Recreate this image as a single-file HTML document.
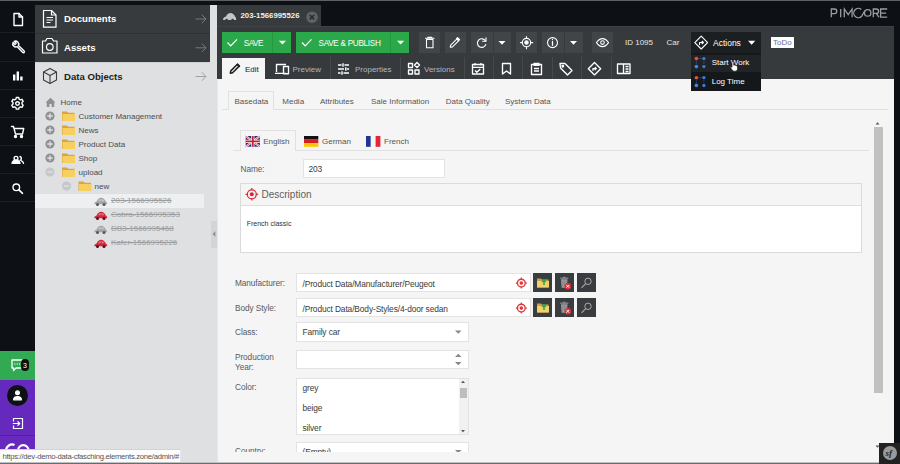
<!DOCTYPE html>
<html><head><meta charset="utf-8">
<style>
*{box-sizing:border-box;margin:0;padding:0}
html,body{width:900px;height:464px;overflow:hidden;background:#f5f5f5;font-family:"Liberation Sans",sans-serif;position:relative}
.a{position:absolute}
.t{position:absolute;white-space:nowrap;line-height:1}
svg{position:absolute;overflow:visible}
.sep{position:absolute;left:0;width:35px;height:1px;background:#1c1f23}
.tr{position:absolute;white-space:nowrap;line-height:1;font-size:8px;color:#4a4d50}
.st{text-decoration:line-through;color:#9b9d9f}
.tb{position:absolute;top:32px;height:21px;background:#424548}
.ts{position:absolute;top:57px;width:1px;height:22px;background:#46494c}
.lbl{position:absolute;white-space:nowrap;line-height:1;font-size:8.3px;letter-spacing:-0.1px;color:#5a5a5a}
.inp{position:absolute;background:#fff;border:1px solid #e3e3e3}
.ib{position:absolute;width:19px;height:19px;background:#3a3d40}
</style></head><body>
<!-- top strip -->
<div class="a" style="left:0;top:0;width:900px;height:1px;background:#5e6064"></div>
<!-- left sidebar -->
<div class="a" style="left:0;top:1px;width:35px;height:463px;background:#0d1014"></div>
<div class="sep" style="top:32px"></div>
<div class="sep" style="top:61px"></div>
<div class="sep" style="top:89px"></div>
<div class="sep" style="top:117px"></div>
<div class="sep" style="top:145px"></div>
<div class="sep" style="top:173px"></div>
<div class="sep" style="top:201px"></div>
<!-- sidebar icons -->
<svg style="left:0;top:0" width="35" height="210" viewBox="0 0 35 210" fill="none" stroke="#fff" stroke-width="1.4" stroke-linejoin="round" stroke-linecap="round">
  <!-- doc -->
  <path d="M14 13.5h5l3.5 3.5v8.5h-8.5z"/><path d="M19 13.5v3.5h3.5" />
  <!-- wrench -->
  <path d="M13 42.5a3.2 3.2 0 0 0 4.2 4.2l5.6 5.8a1 1 0 0 0 1.4-1.4l-5.8-5.6a3.2 3.2 0 0 0-4.2-4.2l2 2-1.2 1.2z"/>
  <!-- chart -->
  <path d="M14.2 74.5v6M17.8 71.5v9M21.4 76.5v4" stroke-width="2.4" stroke-linecap="butt"/>
  <!-- gear -->
  <circle cx="17.5" cy="103.5" r="1.8"/>
  <path d="M16.3 97.5h2.4l.4 1.6 1.3.7 1.6-.5 1.2 2-1.2 1.2v1.6l1.2 1.1-1.2 2.1-1.6-.5-1.3.7-.4 1.6h-2.4l-.4-1.6-1.3-.7-1.6.5-1.2-2.1 1.2-1.1v-1.6l-1.2-1.2 1.2-2 1.6.5 1.3-.7z"/>
  <!-- cart -->
  <path d="M11.5 126.5h2l2 7.5h7l1.2-5.5h-9.2"/><circle cx="15.5" cy="136.5" r="1" fill="#fff"/><circle cx="21.5" cy="136.5" r="1" fill="#fff"/>
  <!-- users -->
  <circle cx="16" cy="158.3" r="1.9"/><path d="M12 163.3c.5-2.2 2-3 4-3s3.5.8 4 3z" fill="#fff"/>
  <path d="M20 156.5a2 2 0 0 1 0 3.8M21.5 160.8c1 .5 1.8 1.3 2 2.5" />
  <!-- search -->
  <circle cx="16.3" cy="187.3" r="3.3"/><path d="M18.7 189.7l3.8 3.6" stroke-width="1.6"/>
</svg>
<!-- bottom sidebar -->
<div class="a" style="left:0;top:351px;width:35px;height:29px;background:#32a953"></div>
<div class="a" style="left:0;top:380px;width:35px;height:84px;background:#6629bd"></div>
<div class="a" style="left:0;top:435px;width:35px;height:1px;background:#5220a0"></div>
<svg style="left:0;top:350px" width="35" height="114" viewBox="0 0 35 114" fill="none" stroke="#fff" stroke-width="1.3" stroke-linejoin="round">
  <path d="M12 10h10v8h-6l-2.5 2.5v-2.5h-1.5z"/>
  <path d="M14.5 14h.8M16.8 14h.8M19 14h.8"/>
</svg>
<div class="a" style="left:21px;top:359px;width:8px;height:12px;border-radius:4px;background:#0d1014"></div>
<div class="t" style="left:23px;top:361.5px;font-size:7px;color:#fff">3</div>
<div class="a" style="left:7px;top:385px;width:21px;height:21px;border-radius:50%;background:#0d1014"></div>
<svg style="left:0;top:380px" width="35" height="84" viewBox="0 0 35 84" fill="none" stroke="#fff" stroke-width="1.2" stroke-linejoin="round">
  <circle cx="17.5" cy="12.8" r="1.9" fill="#fff"/><path d="M13.6 19.8c0-2.2 1.6-3.2 3.9-3.2s3.9 1 3.9 3.2z" fill="#fff"/>
  <path d="M13.5 41.5v-3h9v10h-9v-3M12.8 43.5h6.8M17.5 41.3l2.2 2.2-2.2 2.2"/>
  <path d="M14.5 65a6 6 0 1 0 0 11" stroke-width="2.2"/><circle cx="23.3" cy="70.5" r="5.3" stroke-width="2.2"/>
</svg>

<!-- tree panel -->
<div class="a" style="left:35px;top:1px;width:182px;height:4px;background:#0d1014"></div>
<div class="a" style="left:35px;top:5px;width:182px;height:457px;background:#dfe0e2"></div>
<div class="a" style="left:35px;top:5px;width:175px;height:28px;background:#383b3e"></div>
<div class="a" style="left:35px;top:33px;width:175px;height:1px;background:#2f3235"></div>
<div class="a" style="left:35px;top:34px;width:175px;height:28px;background:#383b3e"></div>
<div class="a" style="left:35px;top:62px;width:175px;height:1px;background:#d0d1d3"></div>
<svg style="left:35px;top:0" width="175" height="90" viewBox="0 0 175 90" fill="none" stroke-linejoin="round">
  <g stroke="#fff" stroke-width="1.2">
    <path d="M8.5 10.5h8l4.5 4.5v12.2h-12.5z"/><path d="M16.5 10.5v4.5h4.5"/>
    <path d="M11.5 17.5h6.5M11.5 20h6.5M11.5 22.5h4" stroke-width="1.1"/>
    <path d="M7.5 41h3l1.5-2.5h5l1.5 2.5h3.5v12h-14.5z"/><circle cx="14.8" cy="47" r="3.3"/>
    <path d="M171 19h-10.5M166.8 14.8l4.2 4.2-4.2 4.2" stroke="#77797c" stroke-width="1"/>
    <path d="M171 47.8h-10.5M166.8 43.6l4.2 4.2-4.2 4.2" stroke="#77797c" stroke-width="1"/>
  </g>
  <g stroke="#3a3c3f" stroke-width="1.1">
    <path d="M15 68.5l6.5 3.5v8l-6.5 3.5-6.5-3.5v-8z"/><path d="M8.5 72l6.5 3.5 6.5-3.5M15 75.5v8"/>
  </g>
  <path d="M171 76.5h-10.5M166.8 72.3l4.2 4.2-4.2 4.2" stroke="#a0a2a4" stroke-width="1"/>
</svg>
<div class="t" style="left:64px;top:13.8px;font-size:9.6px;font-weight:bold;color:#fff">Documents</div>
<div class="t" style="left:64px;top:43.3px;font-size:9.6px;font-weight:bold;color:#fff">Assets</div>
<div class="t" style="left:64px;top:72px;font-size:9.6px;font-weight:bold;color:#1b1d20">Data Objects</div>

<!-- tree -->
<div class="a" style="left:35px;top:193.5px;width:169px;height:14.5px;background:#eeeff0"></div>
<svg style="left:35px;top:90px" width="175" height="165" viewBox="0 0 175 165">
  <!-- home -->
  <path d="M10.5 12.5l5-4.8 5 4.8h-1.3v4.5h-2.6v-3h-2.2v3h-2.6v-4.5z" fill="#8e9093"/>
  <!-- plus circles -->
  <g fill="#8e9093">
    <circle cx="15" cy="26" r="4.6"/><circle cx="15" cy="40" r="4.6"/><circle cx="15" cy="54" r="4.6"/><circle cx="15" cy="68" r="4.6"/>
  </g>
  <g stroke="#dfe0e2" stroke-width="1.3">
    <path d="M12.3 26h5.4M15 23.3v5.4M12.3 40h5.4M15 37.3v5.4M12.3 54h5.4M15 51.3v5.4M12.3 68h5.4M15 65.3v5.4"/>
  </g>
  <g fill="#c6c7c9"><circle cx="15" cy="82" r="4.6"/><circle cx="31.5" cy="96" r="4.6"/></g>
  <g stroke="#dfe0e2" stroke-width="1.3"><path d="M12.3 82h5.4M28.8 96h5.4"/></g>
  <!-- folders -->
  <g>
    <path d="M27 21.5h5l1 1.2h6.5v8.3h-12.5z" fill="#d9a441"/><path d="M27.5 24h12.5v7h-12.5z" fill="#f7cf5e"/>
    <path d="M27 35.5h5l1 1.2h6.5v8.3h-12.5z" fill="#d9a441"/><path d="M27.5 38h12.5v7h-12.5z" fill="#f7cf5e"/>
    <path d="M27 49.5h5l1 1.2h6.5v8.3h-12.5z" fill="#d9a441"/><path d="M27.5 52h12.5v7h-12.5z" fill="#f7cf5e"/>
    <path d="M27 63.5h5l1 1.2h6.5v8.3h-12.5z" fill="#d9a441"/><path d="M27.5 66h12.5v7h-12.5z" fill="#f7cf5e"/>
    <path d="M27 77.5h5l1 1.2h6.5v8.3h-12.5z" fill="#d9a441"/><path d="M27.5 80h12.5v7h-12.5z" fill="#f7cf5e"/>
    <path d="M43.5 91.5h5l1 1.2h6.5v8.3h-12.5z" fill="#d9a441"/><path d="M44 94h12.5v7h-12.5z" fill="#f7cf5e"/>
  </g>
  <!-- cars -->
  <g transform="translate(59,107.5)">
    <path d="M0.3 6.8C0.3 5.2 1 4.4 2.6 4C3.6 1.4 5.2 0.2 7 0.2C9.2 0.2 10.8 1.6 11.8 4C12.7 4.4 13.2 5.3 13.2 6.8Z" fill="#a3a6a9"/>
    <path d="M4.2 3.8C4.8 2.2 5.8 1.4 6.6 1.4V3.8ZM7.6 1.4C8.6 1.4 9.6 2.2 10.2 3.8H7.6Z" fill="#e8e8e8" opacity=".55"/>
    <circle cx="3.5" cy="7" r="1.5" fill="#55585b"/><circle cx="10" cy="7" r="1.5" fill="#55585b"/>
  </g>
  <g transform="translate(59,121.5)">
    <path d="M0.3 6.8C0.3 5.2 1 4.4 2.6 4C3.6 1.4 5.2 0.2 7 0.2C9.2 0.2 10.8 1.6 11.8 4C12.7 4.4 13.2 5.3 13.2 6.8Z" fill="#d3263a"/>
    <path d="M4.2 3.8C4.8 2.2 5.8 1.4 6.6 1.4V3.8ZM7.6 1.4C8.6 1.4 9.6 2.2 10.2 3.8H7.6Z" fill="#f4c0c0" opacity=".55"/>
    <circle cx="3.5" cy="7" r="1.5" fill="#5a1018"/><circle cx="10" cy="7" r="1.5" fill="#5a1018"/>
  </g>
  <g transform="translate(59,135.5)">
    <path d="M0.3 6.8C0.3 5.2 1 4.4 2.6 4C3.6 1.4 5.2 0.2 7 0.2C9.2 0.2 10.8 1.6 11.8 4C12.7 4.4 13.2 5.3 13.2 6.8Z" fill="#a3a6a9"/>
    <path d="M4.2 3.8C4.8 2.2 5.8 1.4 6.6 1.4V3.8ZM7.6 1.4C8.6 1.4 9.6 2.2 10.2 3.8H7.6Z" fill="#e8e8e8" opacity=".55"/>
    <circle cx="3.5" cy="7" r="1.5" fill="#55585b"/><circle cx="10" cy="7" r="1.5" fill="#55585b"/>
  </g>
  <g transform="translate(59,149.5)">
    <path d="M0.3 6.8C0.3 5.2 1 4.4 2.6 4C3.6 1.4 5.2 0.2 7 0.2C9.2 0.2 10.8 1.6 11.8 4C12.7 4.4 13.2 5.3 13.2 6.8Z" fill="#d3263a"/>
    <path d="M4.2 3.8C4.8 2.2 5.8 1.4 6.6 1.4V3.8ZM7.6 1.4C8.6 1.4 9.6 2.2 10.2 3.8H7.6Z" fill="#f4c0c0" opacity=".55"/>
    <circle cx="3.5" cy="7" r="1.5" fill="#5a1018"/><circle cx="10" cy="7" r="1.5" fill="#5a1018"/>
  </g>
  </svg>
<div class="tr" style="left:60.5px;top:98.7px">Home</div>
<div class="tr" style="left:78.5px;top:112.7px">Customer Management</div>
<div class="tr" style="left:78.5px;top:126.7px">News</div>
<div class="tr" style="left:78.5px;top:140.7px">Product Data</div>
<div class="tr" style="left:78.5px;top:154.7px">Shop</div>
<div class="tr" style="left:78.5px;top:168.7px">upload</div>
<div class="tr" style="left:94.5px;top:182.7px">new</div>
<div class="tr st" style="left:111px;top:196.7px">203-1566995526</div>
<div class="tr st" style="left:111px;top:210.7px">Cobra-1566995353</div>
<div class="tr st" style="left:111px;top:224.7px">DB3-1566995468</div>
<div class="tr st" style="left:111px;top:238.7px">Kafer-1566995226</div>
<!-- splitter handle -->
<div class="a" style="left:211px;top:221px;width:5.5px;height:27px;background:#d3d4d6"></div>
<svg style="left:211px;top:221px" width="6" height="27"><path d="M4.3 10.3v5.4l-2.7-2.7z" fill="#8a8c8f"/></svg>

<!-- status tooltip -->
<div class="a" style="left:0;top:449px;width:181px;height:14px;background:#fdfdfd;border-top:1.5px solid #d3d3d3;border-right:1px solid #e6e6e6"></div>
<div class="t" style="left:2.5px;top:452.8px;font-size:7.7px;letter-spacing:-0.28px;color:#555">https://dev-demo-data-cfasching.elements.zone/admin/#</div>

<!-- main dark area -->
<div class="a" style="left:217px;top:1px;width:683px;height:25px;background:#0d1014"></div>
<div class="a" style="left:217px;top:5px;width:104px;height:21px;background:#383b3e"></div>
<svg style="left:217px;top:5px" width="104" height="21">
  <path d="M6 15C6 12.8 7 12 9 11.4C10.2 9 11.8 8 13.5 8C15.5 8 17 9.4 18 11.4C18.8 12 19.2 13 19.2 15Z" fill="#c3c5c7"/>
  <circle cx="9.6" cy="15.2" r="1.4" fill="#383b3e"/><circle cx="15.6" cy="15.2" r="1.4" fill="#383b3e"/>
  <circle cx="95" cy="12.2" r="5.8" fill="#606265"/>
  <path d="M92.8 10l4.4 4.4M97.2 10l-4.4 4.4" stroke="#2a2c2f" stroke-width="1.6"/>
</svg>
<div class="t" style="left:240.5px;top:11.5px;font-size:7.8px;font-weight:bold;color:#f0f0f0">203-1566995526</div>
<!-- toolbar -->
<div class="a" style="left:217px;top:26px;width:677px;height:53px;background:#373a3d"></div>
<div class="a" style="left:217px;top:26px;width:677px;height:1px;background:#404346"></div>
<div class="a" style="left:894px;top:26px;width:6px;height:438px;background:#0d1014"></div>
<!-- pimcore logo -->
<svg style="left:0;top:0" width="900" height="26" fill="none" stroke="#9a9c9e" stroke-width="1.3">
  <path d="M831.3 17.2V9h3.2a2.3 2.3 0 0 1 0 4.6h-3.2M840.7 9v8.2M844.3 17.2V9l3.9 5.6 3.9-5.6v8.2"/>
  <path d="M861.3 9.5A4.6 4.6 0 1 0 861.7 16.2L864.9 10.7"/><circle cx="867.7" cy="12.9" r="3.2"/>
  <path d="M873.3 17.2V9h3.1a2.2 2.2 0 0 1 0 4.4h-3.1M876.3 13.4l2.6 3.8M887.2 9h-6.6v8.2h6.6M880.6 13.1h5.6"/>
</svg>

<!-- green buttons -->
<div class="a" style="left:222px;top:32px;width:69px;height:21px;background:#2ba84a"></div>
<div class="a" style="left:272px;top:32px;width:1px;height:21px;background:#27963f"></div>
<div class="a" style="left:296px;top:32px;width:113px;height:21px;background:#2ba84a"></div>
<div class="a" style="left:390px;top:32px;width:1px;height:21px;background:#27963f"></div>
<svg style="left:0;top:0" width="900" height="60" fill="none">
  <path d="M227.5 42.5l3.2 3.3 6.3-6.5" stroke="#fff" stroke-width="1.2"/>
  <path d="M278.8 40.8h7.2l-3.6 3.8z" fill="#fff"/>
  <path d="M302 42.5l3.2 3.3 6.3-6.5" stroke="#fff" stroke-width="1.2"/>
  <path d="M397 40.8h7.2l-3.6 3.8z" fill="#fff"/>
</svg>
<div class="t" style="left:243.7px;top:39.7px;font-size:8.2px;letter-spacing:-0.45px;color:#fff">SAVE</div>
<div class="t" style="left:318.5px;top:39.7px;font-size:8.2px;letter-spacing:-0.3px;color:#fff">SAVE &amp; PUBLISH</div>

<!-- dark toolbar buttons -->
<div class="tb" style="left:419px;width:21px"></div>
<div class="tb" style="left:444.5px;width:21.5px"></div>
<div class="tb" style="left:471px;width:40px"></div>
<div class="tb" style="left:516px;width:21px"></div>
<div class="tb" style="left:541.5px;width:41px"></div>
<div class="tb" style="left:592px;width:21px"></div>
<div class="a" style="left:492.5px;top:32px;width:1px;height:21px;background:#37393c"></div>
<div class="a" style="left:563.5px;top:32px;width:1px;height:21px;background:#37393c"></div>
<svg style="left:0;top:0" width="900" height="60" fill="none" stroke="#fff" stroke-width="1.1" stroke-linejoin="round" stroke-linecap="round">
  <!-- trash -->
  <path d="M425.5 38.2h8.5M427.8 38.2v-.8h4v.8"/><path d="M426.5 39.5h6.5v8.3h-6.5z"/>
  <!-- pencil -->
  <path d="M450.3 47.3l.4-2.2 6.3-6.3 1.8 1.8-6.3 6.3z"/><path d="M457.6 37.6l2 2-1.1 1.1-2-2z" fill="#fff"/>
  <!-- reload -->
  <path d="M485.5 41a4.3 4.3 0 1 0 .3 3.5"/><path d="M486 37.8v3.4h-3.4" />
  <path d="M498.5 41h7l-3.5 3.7z" fill="#fff" stroke="none"/>
  <!-- target -->
  <circle cx="526.5" cy="42.6" r="4.2"/><circle cx="526.5" cy="42.6" r="1.7" fill="#fff"/>
  <path d="M526.5 36.5v2M526.5 46.8v2M520.5 42.6h2M530.7 42.6h2"/>
  <!-- info -->
  <circle cx="552.5" cy="42.6" r="5"/><path d="M552.5 41.5v3.8M552.5 39.3v.3" stroke-width="1.3"/>
  <path d="M570 41h7l-3.5 3.7z" fill="#fff" stroke="none"/>
  <!-- eye -->
  <path d="M596.5 42.6c2-3 4-4 6-4s4 1 6 4c-2 3-4 4-6 4s-4-1-6-4z"/><circle cx="602.5" cy="42.6" r="1.8"/>
</svg>
<div class="t" style="left:625px;top:39px;font-size:8px;color:#e6e6e6">ID 1095</div>
<div class="t" style="left:666.5px;top:39px;font-size:8px;color:#e6e6e6">Car</div>

<!-- actions -->
<div class="a" style="left:691px;top:32px;width:70px;height:21px;background:#1c1f22"></div>
<div class="a" style="left:771px;top:37px;width:23px;height:11px;background:#fff"></div>
<div class="t" style="left:773px;top:39px;font-size:8px;color:#6670a8">ToDo</div>

<!-- tab strip -->
<div class="a" style="left:222px;top:58.4px;width:43.2px;height:21px;background:#f5f5f5"></div>
<div class="ts" style="left:330px"></div>
<div class="ts" style="left:400px"></div>
<div class="ts" style="left:464px"></div>
<div class="ts" style="left:493px"></div>
<div class="ts" style="left:522px"></div>
<div class="ts" style="left:552px"></div>
<div class="ts" style="left:581px"></div>
<div class="ts" style="left:611px"></div>
<svg style="left:0;top:0" width="900" height="90" fill="none" stroke="#fff" stroke-width="1.35" stroke-linejoin="round">
  <!-- pencil dark -->
  <path d="M230.3 73.2l.5-2.3 6.6-6.6 1.8 1.8-6.6 6.6z" stroke="#1e1e1e" stroke-width="1.5"/><path d="M237.6 63.2l2.8 2.8-1.3 1.3-2.8-2.8z" fill="#1e1e1e" stroke="none"/>
  <!-- preview -->
  <path d="M276.5 72v-7.5h9.5M275 73.3h11" /><path d="M283.5 66.5h5v7.2h-5z"/>
  <!-- properties -->
  <path d="M338 65h3.5M344.5 65h4.5M338 69h6M347 69h2M338 73h2.5M343.5 73h5.5M343 63.3v3.4M345.8 67.3v3.4M342 71.3v3.4" stroke-width="1.4"/>
  <!-- versions -->
  <path d="M408.5 63.5h4v4h-4zM408.5 70h4v4h-4zM415 70h4v4h-4z"/><path d="M417 62.5l2.5 2.5-2.5 2.5-2.5-2.5z"/>
  <!-- calendar -->
  <path d="M472.5 64.5h11v9.5h-11zM472.5 67.3h11M475 63v2.5M481 63v2.5"/><path d="M475 70.5l1.8 1.8 3.5-3.3"/>
  <!-- bookmark -->
  <path d="M502.5 63.5h8v10.5l-4-3-4 3z"/>
  <!-- clipboard -->
  <path d="M531.5 64.5h10v10h-10z"/><path d="M534 63.3h5v2h-5z"/><path d="M534 68.5h5M534 71h5"/>
  <!-- tag -->
  <path d="M560 63.5h5l7 7-4.5 4.5-7-7z"/><circle cx="562.8" cy="66.3" r=".8" fill="#fff"/>
  <!-- workflow diamond -->
  <path d="M594.5 62.5l6.2 6.2-6.2 6.2-6.2-6.2z"/><path d="M593 70.8v-2.2h3.2M594.8 67.2l1.4 1.4-1.4 1.4"/>
  <!-- layout -->
  <path d="M617.5 64h12.5v9.5h-12.5zM623.5 64v9.5M625.5 66.5h3M625.5 69h3M625.5 71.5h3"/>
</svg>
<div class="t" style="left:245px;top:65.8px;font-size:8px;color:#222">Edit</div>
<div class="t" style="left:292.5px;top:65.8px;font-size:8px;color:#b5b7b9">Preview</div>
<div class="t" style="left:355px;top:65.8px;font-size:8px;color:#b5b7b9">Properties</div>
<div class="t" style="left:424px;top:65.8px;font-size:8px;color:#b5b7b9">Versions</div>

<!-- content -->
<div class="a" style="left:217px;top:79.4px;width:677px;height:383px;background:#f5f5f5"></div>
<div class="a" style="left:217px;top:79px;width:1px;height:383px;background:#e6e6e6"></div>
<!-- tabs level 2 -->
<div class="a" style="left:222px;top:108.5px;width:666px;height:1px;background:#e1e1e1"></div>
<div class="a" style="left:227.5px;top:91px;width:46px;height:18.5px;background:#f5f5f5;border:1px solid #e1e1e1;border-bottom:none"></div>
<div class="t" style="left:234.5px;top:97.6px;font-size:8px;color:#555">Basedata</div>
<div class="t" style="left:282.3px;top:97.6px;font-size:8px;color:#555">Media</div>
<div class="t" style="left:320px;top:97.6px;font-size:8px;color:#555">Attributes</div>
<div class="t" style="left:371px;top:97.6px;font-size:8px;color:#555">Sale Information</div>
<div class="t" style="left:445.7px;top:97.6px;font-size:8px;color:#555">Data Quality</div>
<div class="t" style="left:505px;top:97.6px;font-size:8px;color:#555">System Data</div>

<!-- scrollbar -->
<div class="a" style="left:873.5px;top:126.5px;width:9px;height:266.5px;background:#c1c1c1"></div>
<svg style="left:873px;top:118px" width="10" height="335">
  <path d="M2.5 6.5h4l-2-2.3z" fill="#555"/>
  <path d="M2.5 327.5h4l-2 2.3z" fill="#555"/>
</svg>

<!-- language tabs -->
<div class="a" style="left:233px;top:150px;width:635.5px;height:1px;background:#e1e1e1"></div>
<div class="a" style="left:239.5px;top:130px;width:56px;height:21px;background:#f5f5f5;border:1px solid #e1e1e1;border-bottom:none"></div>
<svg style="left:0;top:0" width="900" height="160">
  <!-- UK -->
  <rect x="245.7" y="136" width="14.2" height="10.7" fill="#25307a"/>
  <path d="M245.7 136l14.2 10.7M259.9 136l-14.2 10.7" stroke="#fff" stroke-width="2"/>
  <path d="M245.7 136l14.2 10.7M259.9 136l-14.2 10.7" stroke="#c8202f" stroke-width=".7"/>
  <path d="M252.8 136v10.7M245.7 141.35h14.2" stroke="#fff" stroke-width="3.2"/>
  <path d="M252.8 136v10.7M245.7 141.35h14.2" stroke="#c8202f" stroke-width="1.8"/>
  <!-- DE -->
  <rect x="304" y="136" width="14.3" height="3.6" fill="#111"/>
  <rect x="304" y="139.6" width="14.3" height="3.6" fill="#d81e1e"/>
  <rect x="304" y="143.2" width="14.3" height="3.6" fill="#fcc800"/>
  <!-- FR -->
  <rect x="366" y="136" width="4.8" height="10.8" fill="#1e3596"/>
  <rect x="370.8" y="136" width="4.8" height="10.8" fill="#f5f5f5"/>
  <rect x="375.6" y="136" width="4.8" height="10.8" fill="#e52535"/>
</svg>
<div class="t" style="left:263.2px;top:137.5px;font-size:8px;color:#555">English</div>
<div class="t" style="left:322px;top:137.5px;font-size:8px;color:#555">German</div>
<div class="t" style="left:384px;top:137.5px;font-size:8px;color:#555">French</div>

<!-- name -->
<div class="lbl" style="left:240.5px;top:164.7px">Name:</div>
<div class="inp" style="left:303px;top:159px;width:142px;height:18.5px"></div>
<div class="t" style="left:308.5px;top:165.3px;font-size:8.4px;letter-spacing:-0.12px;color:#3a3a3a">203</div>

<!-- description panel -->
<div class="a" style="left:240px;top:183px;width:622px;height:70px;background:#fff;border:1px solid #dadada"></div>
<div class="a" style="left:241px;top:184px;width:620px;height:21.5px;background:#f5f5f5;border-bottom:1px solid #dedede"></div>
<svg style="left:0;top:0" width="900" height="260">
  <circle cx="251.8" cy="194.3" r="4.5" fill="none" stroke="#d8272f" stroke-width="1.2"/>
  <circle cx="251.8" cy="194.3" r="2" fill="#d8272f"/>
  <path d="M251.8 188v1.8M251.8 198.8v1.8M245.5 194.3h1.8M256.3 194.3h1.8" stroke="#d8272f" stroke-width="1.2"/>
</svg>
<div class="t" style="left:261.5px;top:190px;font-size:10px;color:#606060">Description</div>
<div class="t" style="left:246.7px;top:219.5px;font-size:7px;color:#333">French classic</div>

<!-- relation rows -->
<div class="lbl" style="left:235px;top:279px">Manufacturer:</div>
<div class="inp" style="left:296px;top:273px;width:234.5px;height:19px"></div>
<div class="t" style="left:302.5px;top:280px;font-size:8.4px;letter-spacing:-0.12px;color:#3a3a3a">/Product Data/Manufacturer/Peugeot</div>
<div class="ib" style="left:533px;top:273px"></div>
<div class="ib" style="left:555px;top:273px"></div>
<div class="ib" style="left:577px;top:273px"></div>

<div class="lbl" style="left:235px;top:303.5px">Body Style:</div>
<div class="inp" style="left:296px;top:298px;width:234.5px;height:19px"></div>
<div class="t" style="left:302.5px;top:304.5px;font-size:8.4px;letter-spacing:-0.12px;color:#3a3a3a">/Product Data/Body-Styles/4-door sedan</div>
<div class="ib" style="left:533px;top:298px"></div>
<div class="ib" style="left:555px;top:298px"></div>
<div class="ib" style="left:577px;top:298px"></div>
<svg style="left:0;top:0" width="900" height="330">
  <g>
    <circle cx="521.3" cy="283.1" r="3.9" fill="none" stroke="#e0383c" stroke-width="1.4"/>
    <circle cx="521.3" cy="283.1" r="1.8" fill="#e0383c"/>
    <path d="M521.3 277.6v1.3M521.3 287.3v1.3M515.8 283.1h1.3M525.5 283.1h1.3" stroke="#e0383c" stroke-width="1.2"/>
    <!-- folder -->
    <path d="M537 278.5h4l1 1h6.5v8h-11.5z" fill="#c9a043"/>
    <path d="M537 281h12v6.5h-12z" fill="#f2d06b"/>
    <path d="M544 285v-5M542 281.8l2-2 2 2" stroke="#2ea84b" stroke-width="1.6" fill="none"/>
    <!-- trash -->
    <path d="M561 279.2h6.5l-.6 8.6h-5.3z" fill="#9a9c9e"/>
    <path d="M560.2 278.2h8.2M563 277.3h2.6" stroke="#9a9c9e" stroke-width="1"/>
    <path d="M562.8 280.5v6M564.5 280.5v6M566.2 280.5v6" stroke="#6e7073" stroke-width=".5"/>
    <circle cx="567.8" cy="286.3" r="3.2" fill="#e2333a"/>
    <path d="M566.4 284.9l2.8 2.8M569.2 284.9l-2.8 2.8" stroke="#fff" stroke-width=".9"/>
    <!-- search -->
    <circle cx="588" cy="281.3" r="3.2" fill="none" stroke="#a8aaac" stroke-width="1"/>
    <path d="M585.7 283.6l-4.2 4.2" stroke="#a8aaac" stroke-width="1.1"/>
  </g>
  <g transform="translate(0,25)">
    <circle cx="521.3" cy="283.1" r="3.9" fill="none" stroke="#e0383c" stroke-width="1.4"/>
    <circle cx="521.3" cy="283.1" r="1.8" fill="#e0383c"/>
    <path d="M521.3 277.6v1.3M521.3 287.3v1.3M515.8 283.1h1.3M525.5 283.1h1.3" stroke="#e0383c" stroke-width="1.2"/>
    <!-- folder -->
    <path d="M537 278.5h4l1 1h6.5v8h-11.5z" fill="#c9a043"/>
    <path d="M537 281h12v6.5h-12z" fill="#f2d06b"/>
    <path d="M544 285v-5M542 281.8l2-2 2 2" stroke="#2ea84b" stroke-width="1.6" fill="none"/>
    <!-- trash -->
    <path d="M561 279.2h6.5l-.6 8.6h-5.3z" fill="#9a9c9e"/>
    <path d="M560.2 278.2h8.2M563 277.3h2.6" stroke="#9a9c9e" stroke-width="1"/>
    <path d="M562.8 280.5v6M564.5 280.5v6M566.2 280.5v6" stroke="#6e7073" stroke-width=".5"/>
    <circle cx="567.8" cy="286.3" r="3.2" fill="#e2333a"/>
    <path d="M566.4 284.9l2.8 2.8M569.2 284.9l-2.8 2.8" stroke="#fff" stroke-width=".9"/>
    <!-- search -->
    <circle cx="588" cy="281.3" r="3.2" fill="none" stroke="#a8aaac" stroke-width="1"/>
    <path d="M585.7 283.6l-4.2 4.2" stroke="#a8aaac" stroke-width="1.1"/>
  </g>
</svg>

<!-- class -->
<div class="lbl" style="left:235px;top:327.5px">Class:</div>
<div class="inp" style="left:296px;top:322px;width:172.5px;height:19.5px"></div>
<div class="t" style="left:302.5px;top:328px;font-size:8.4px;letter-spacing:-0.12px;color:#3a3a3a">Family car</div>
<!-- production year -->
<div class="lbl" style="left:235px;top:352.5px">Production</div>
<div class="lbl" style="left:235px;top:362.8px">Year:</div>
<div class="inp" style="left:296px;top:350px;width:172.5px;height:19px"></div>
<!-- color -->
<div class="lbl" style="left:235px;top:382.8px">Color:</div>
<div class="inp" style="left:296px;top:377.5px;width:172.5px;height:57.5px"></div>
<div class="a" style="left:458.5px;top:378.5px;width:9px;height:55.5px;background:#f1f1f1"></div>
<div class="a" style="left:459.5px;top:387.5px;width:7px;height:10px;background:#bdbdbd"></div>
<div class="t" style="left:302.5px;top:384px;font-size:8.4px;letter-spacing:-0.12px;color:#3a3a3a">grey</div>
<div class="t" style="left:302.5px;top:403.5px;font-size:8.4px;letter-spacing:-0.12px;color:#3a3a3a">beige</div>
<div class="t" style="left:302.5px;top:424px;font-size:8.4px;letter-spacing:-0.12px;color:#3a3a3a">silver</div>
<!-- country -->
<div class="lbl" style="left:235px;top:446.5px">Country:</div>
<div class="inp" style="left:296px;top:441.5px;width:172.5px;height:25px"></div>
<div class="t" style="left:302.5px;top:447.5px;font-size:8.4px;letter-spacing:-0.12px;color:#3a3a3a">(Empty)</div>
<svg style="left:0;top:0" width="900" height="464">
  <path d="M455 330.5h6.5l-3.25 3.3z" fill="#888"/>
  <path d="M455 357h6.5l-3.25-3.3zM455 362h6.5l-3.25 3.3z" fill="#888"/>
  <path d="M461 383h4l-2-2.3zM461 430h4l-2 2.3z" fill="#555"/>
  <path d="M455 450h6.5l-3.25 3.3z" fill="#888"/>
</svg>
<div class="a" style="left:218px;top:452px;width:655px;height:10px;background:#f5f5f5"></div>
<!-- actions menu -->
<div class="a" style="left:691px;top:53px;width:70px;height:38px;background:#15181b"></div>
<div class="a" style="left:691px;top:54.5px;width:70px;height:17.5px;background:#212427"></div>
<svg style="left:0;top:0" width="900" height="100" fill="none" stroke="#fff" stroke-width="1.1" stroke-linejoin="round">
  <path d="M701.2 36.2l6.4 6.4-6.4 6.4-6.4-6.4z"/>
  <path d="M699.5 45v-2.5h3.5M701.8 41l1.6 1.5-1.6 1.5"/>
  <path d="M748 40.8h7.3l-3.65 3.9z" fill="#fff" stroke="none"/>
</svg>
<svg style="left:0;top:0" width="900" height="100">
  <g>
    <circle cx="696.4" cy="58.6" r="1.8" fill="#e5533f"/><circle cx="703.9" cy="58.6" r="1.6" fill="#3f7ee0"/>
    <circle cx="696.4" cy="66.6" r="1.8" fill="#3f86f0"/><circle cx="703.9" cy="66.6" r="1.6" fill="#3f7ee0"/>
    <path d="M698.2 58.6h4M696.4 61v3M703.9 61v3" stroke="#3f7ee0" stroke-width=".6" opacity=".6"/>
    <circle cx="696.4" cy="77.7" r="1.8" fill="#e5533f"/><circle cx="703.9" cy="77.7" r="1.6" fill="#3f7ee0"/>
    <circle cx="696.4" cy="85.4" r="1.8" fill="#3f86f0"/><circle cx="703.9" cy="85.4" r="1.6" fill="#3f7ee0"/>
    <path d="M698.2 77.7h4M696.4 80v3M703.9 80v3" stroke="#3f7ee0" stroke-width=".6" opacity=".6"/>
  </g>
</svg>
<div class="t" style="left:713px;top:38.8px;font-size:8.5px;color:#fff">Actions</div>
<div class="t" style="left:711.7px;top:59px;font-size:8px;color:#fff">Start Work</div>
<div class="t" style="left:711.7px;top:78px;font-size:8px;color:#fff">Log Time</div>
<!-- hand cursor -->
<svg style="left:729.5px;top:60px;transform:scale(.78);transform-origin:0 0" width="12" height="14">
  <path d="M3.5 1.5c.8 0 1.2.5 1.2 1.2v4l.5-.3c.6-.3 1.3 0 1.5.5.5-.3 1.3-.1 1.5.5.6-.2 1.4.1 1.4.8v3.3c0 1.6-1.2 2.8-2.8 2.8h-1.5c-1 0-1.8-.4-2.3-1.2l-2.3-3.3c-.4-.6.3-1.4 1-1l.9.7v-6.8c0-.7.4-1.2.9-1.2z" fill="#fff" stroke="#111" stroke-width=".8"/>
</svg>
<!-- bottom border -->
<div class="a" style="left:0;top:462px;width:900px;height:1px;background:#c0c1c2"></div><div class="a" style="left:0;top:463px;width:900px;height:1px;background:#6a6b6d"></div>
<!-- symfony badge -->
<div class="a" style="left:879px;top:442.5px;width:21px;height:21.5px;background:#222"></div>
<div class="a" style="left:883px;top:446px;width:14px;height:14px;border-radius:50%;background:#9a9a9a"></div>
<div class="t" style="left:885.5px;top:448.5px;font-size:9px;font-style:italic;font-family:'Liberation Serif',serif;color:#222;font-weight:bold">sf</div>
</body></html>
